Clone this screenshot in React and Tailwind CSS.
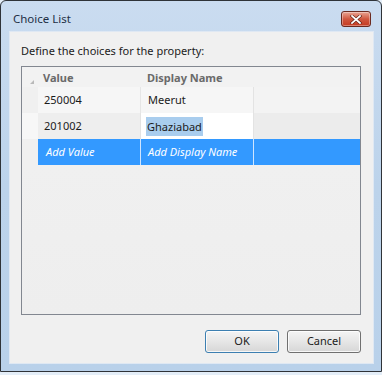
import React from 'react';

const font = { fontFamily: '"Noto Sans", "Open Sans", sans-serif' };

const CloseButton = () => (
    <div className="w-[30px] h-[16px] rounded-[3px] border border-[#6b2a20] bg-gradient-to-b from-[#e8a493] via-[#d0573f] to-[#c53a20] flex items-center justify-center shadow-[inset_0_0_0_1px_rgba(255,255,255,0.35)]">
        <svg width="12" height="9" viewBox="0 0 12 9">
            <path d="M2 1 L10 8 M10 1 L2 8" stroke="#5a1d12" strokeWidth="3" strokeLinecap="square" />
            <path d="M2 1 L10 8 M10 1 L2 8" stroke="#ffffff" strokeWidth="1.8" strokeLinecap="square" />
        </svg>
    </div>
);

const Button = ({ label, focused }) => (
    <button
        className={`w-[74px] h-[23px] rounded-[3px] border text-[11px] text-[#1b1b1b] bg-gradient-to-b from-[#f4f4f4] via-[#e6e6e6] to-[#d6d6d6] shadow-[inset_0_0_0_1px_rgba(255,255,255,0.8)] ${focused ? 'border-[#3c7fb1]' : 'border-[#707070]'}`}
        style={font}
    >
        {label}
    </button>
);

export default function App() {
    return (
        <div className="w-[382px] h-[375px] bg-[#e4eef8]" style={font}>
            {/* window frame */}
            <div className="h-[372px] border border-[#2f3338] rounded-t-[6px] bg-gradient-to-b from-[#cadcf0] via-[#bcd3eb] to-[#b9d1ea] flex flex-col pl-[8px] pr-[7px] pb-[7px]">
                {/* title bar */}
                <div className="h-[30px] flex items-start justify-between">
                    <span className="text-[11.5px] text-[#1e2f44] pl-[4px] pt-[10px] leading-[16px]">Choice List</span>
                    <div className="pt-[10px] pr-[3px]">
                        <CloseButton />
                    </div>
                </div>

                {/* client area */}
                <div className="flex-1 bg-[#f0f0f0] border border-[#dfe8f3] flex flex-col pl-[11px] pr-[12px] pt-[11px] pb-[10px]">
                    <p className="text-[11px] leading-[16px] text-[#1b1b1b]">Define the choices for the property:</p>

                    {/* grid */}
                    <div className="mt-[7px] h-[249px] border border-[#828790] bg-[#f0f0f0] flex flex-col text-[11px] text-[#1b1b1b]">
                        {/* header */}
                        <div className="h-[20px] grid grid-cols-[16px_103px_113px_1fr] bg-[#f2f2f2]">
                            <div className="relative">
                                <svg className="absolute left-[8px] top-[13px]" width="4" height="4" viewBox="0 0 4 4">
                                    <path d="M4 0 L4 4 L0 4 Z" fill="#b9b9b9" />
                                </svg>
                            </div>
                            <div className="pl-[5px] font-bold text-[#6a6a6a] leading-[21px]">Value</div>
                            <div className="pl-[6px] font-bold text-[#6a6a6a] leading-[21px]">Display Name</div>
                            <div />
                        </div>

                        {/* row 1 */}
                        <div className="h-[26px] grid grid-cols-[16px_103px_113px_1fr]">
                            <div className="bg-[#f0f0f0]" />
                            <div className="bg-[#f6f6f6] border-r border-[#e6e6e6] pl-[6px] leading-[26px]">250004</div>
                            <div className="bg-[#f6f6f6] border-r border-[#e3e3e3] pl-[7px] leading-[26px]">Meerut</div>
                            <div className="bg-[#f3f3f3]" />
                        </div>

                        {/* row 2 */}
                        <div className="h-[26px] grid grid-cols-[16px_103px_113px_1fr]">
                            <div className="bg-[#f7f7f7]" />
                            <div className="bg-[#eeeeee] border-r border-[#e3e3e3] pl-[6px] leading-[26px]">201002</div>
                            <div className="bg-white border-r border-[#e3e3e3] pl-[5px] flex items-center">
                                <span className="bg-[#a9cdee] leading-[19px] px-[1px]">Ghaziabad</span>
                            </div>
                            <div className="bg-[#ececec]" />
                        </div>

                        {/* new row */}
                        <div className="h-[26px] grid grid-cols-[16px_103px_113px_1fr] italic text-white">
                            <div className="bg-[#f0f0f0]" />
                            <div className="bg-[#3399ff] border-r border-[#cfe5ff] pl-[8px] leading-[26px]">Add Value</div>
                            <div className="bg-[#3399ff] border-r border-[#cfe5ff] pl-[7px] leading-[26px]">Add Display Name</div>
                            <div className="bg-[#3399ff]" />
                        </div>

                        <div className="flex-1 bg-gradient-to-b from-[#f0f0f0] to-[#eeeeee]" />
                    </div>

                    {/* buttons */}
                    <div className="mt-[15px] flex justify-end gap-[8px]">
                        <Button label="OK" focused />
                        <Button label="Cancel" />
                    </div>
                </div>
            </div>
        </div>
    );
}
